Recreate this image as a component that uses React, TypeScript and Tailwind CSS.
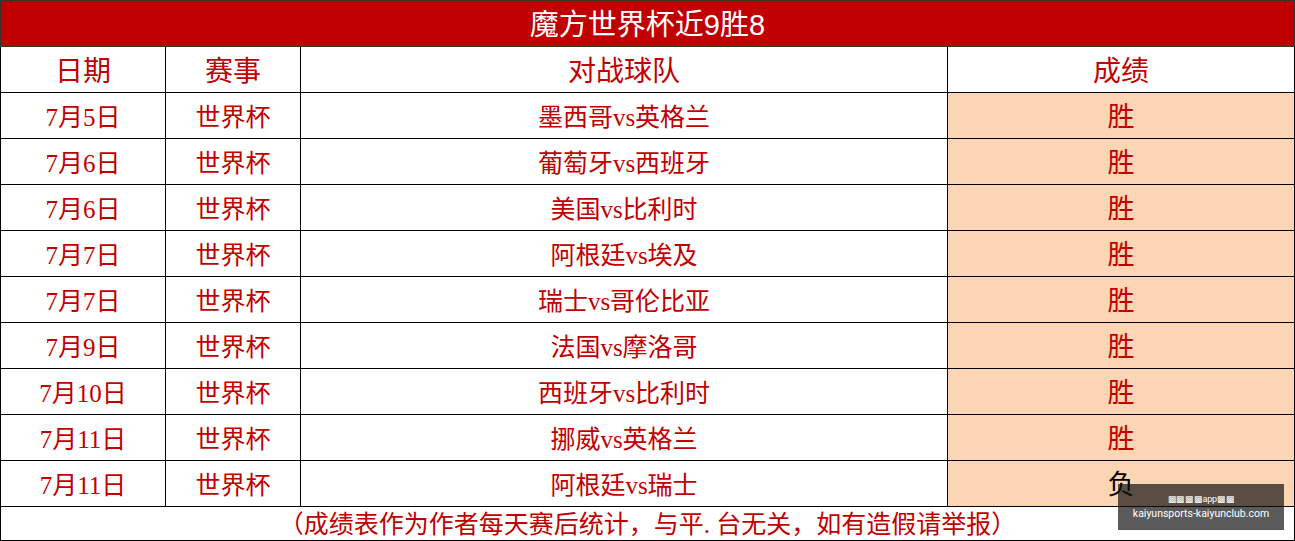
import React from 'react';

const rows = [
  { date: '7月5日', teams: '墨西哥vs英格兰', result: '胜' },
  { date: '7月6日', teams: '葡萄牙vs西班牙', result: '胜' },
  { date: '7月6日', teams: '美国vs比利时', result: '胜' },
  { date: '7月7日', teams: '阿根廷vs埃及', result: '胜' },
  { date: '7月7日', teams: '瑞士vs哥伦比亚', result: '胜' },
  { date: '7月9日', teams: '法国vs摩洛哥', result: '胜' },
  { date: '7月10日', teams: '西班牙vs比利时', result: '胜' },
  { date: '7月11日', teams: '挪威vs英格兰', result: '胜' },
  { date: '7月11日', teams: '阿根廷vs瑞士', result: '负' },
];

const serif = "font-['Liberation_Serif','Noto_Sans_CJK_SC',serif]";

export default function App() {
  return (
    <div className={`relative w-[1295px] h-[541px] bg-white overflow-hidden ${serif}`}>
      <table className="w-[1295px] table-fixed border-collapse">
        <colgroup>
          <col className="w-[165px]" />
          <col className="w-[135px]" />
          <col className="w-[647px]" />
          <col />
        </colgroup>
        <tbody>
          <tr>
            <td
              colSpan={4}
              className="h-[46px] p-0 pt-[4px] border border-[#333] bg-[#c00000] text-center text-white text-[29px] leading-none font-['Liberation_Sans','Noto_Sans_CJK_SC',sans-serif]"
            >
              魔方世界杯近9胜8
            </td>
          </tr>
          <tr className="text-[#c00000] text-[28px] leading-none">
            <td className="h-[46px] p-0 pt-[4px] border border-black text-center">日期</td>
            <td className="h-[46px] p-0 pt-[4px] border border-black text-center">赛事</td>
            <td className="h-[46px] p-0 pt-[4px] border border-black text-center">对战球队</td>
            <td className="h-[46px] p-0 pt-[4px] border border-black text-center">成绩</td>
          </tr>
          {rows.map((r, i) => (
            <tr key={i} className="text-[#c00000] text-[25px] leading-none">
              <td className="h-[46px] p-0 pt-[4px] border border-black text-center">{r.date}</td>
              <td className="h-[46px] p-0 pt-[4px] border border-black text-center">世界杯</td>
              <td className="h-[46px] p-0 pt-[4px] border border-black text-center">{r.teams}</td>
              <td
                className={`h-[46px] p-0 pt-[4px] border border-black text-center bg-[#fcd5b4] text-[27px] ${
                  r.result === '负' ? 'text-black' : 'text-[#c00000]'
                }`}
              >
                {r.result}
              </td>
            </tr>
          ))}
          <tr>
            <td
              colSpan={4}
              className="h-[34px] p-0 pt-[2px] border border-black text-center text-[#c00000] text-[25px] leading-none"
            >
              （成绩表作为作者每天赛后统计，与平. 台无关，如有造假请举报）
            </td>
          </tr>
        </tbody>
      </table>

      {/* watermark */}
      <div className="absolute left-[1118px] top-[484px] w-[166px] h-[46px] bg-[rgba(18,18,18,0.69)] flex flex-col items-center justify-center text-white font-['Roboto','Liberation_Sans',sans-serif] leading-none">
        <div className="text-[9px] tracking-tight">▩▩▩▩app▩▩</div>
        <div className="text-[10.5px] mt-[5px]">kaiyunsports-kaiyunclub.com</div>
      </div>
    </div>
  );
}
